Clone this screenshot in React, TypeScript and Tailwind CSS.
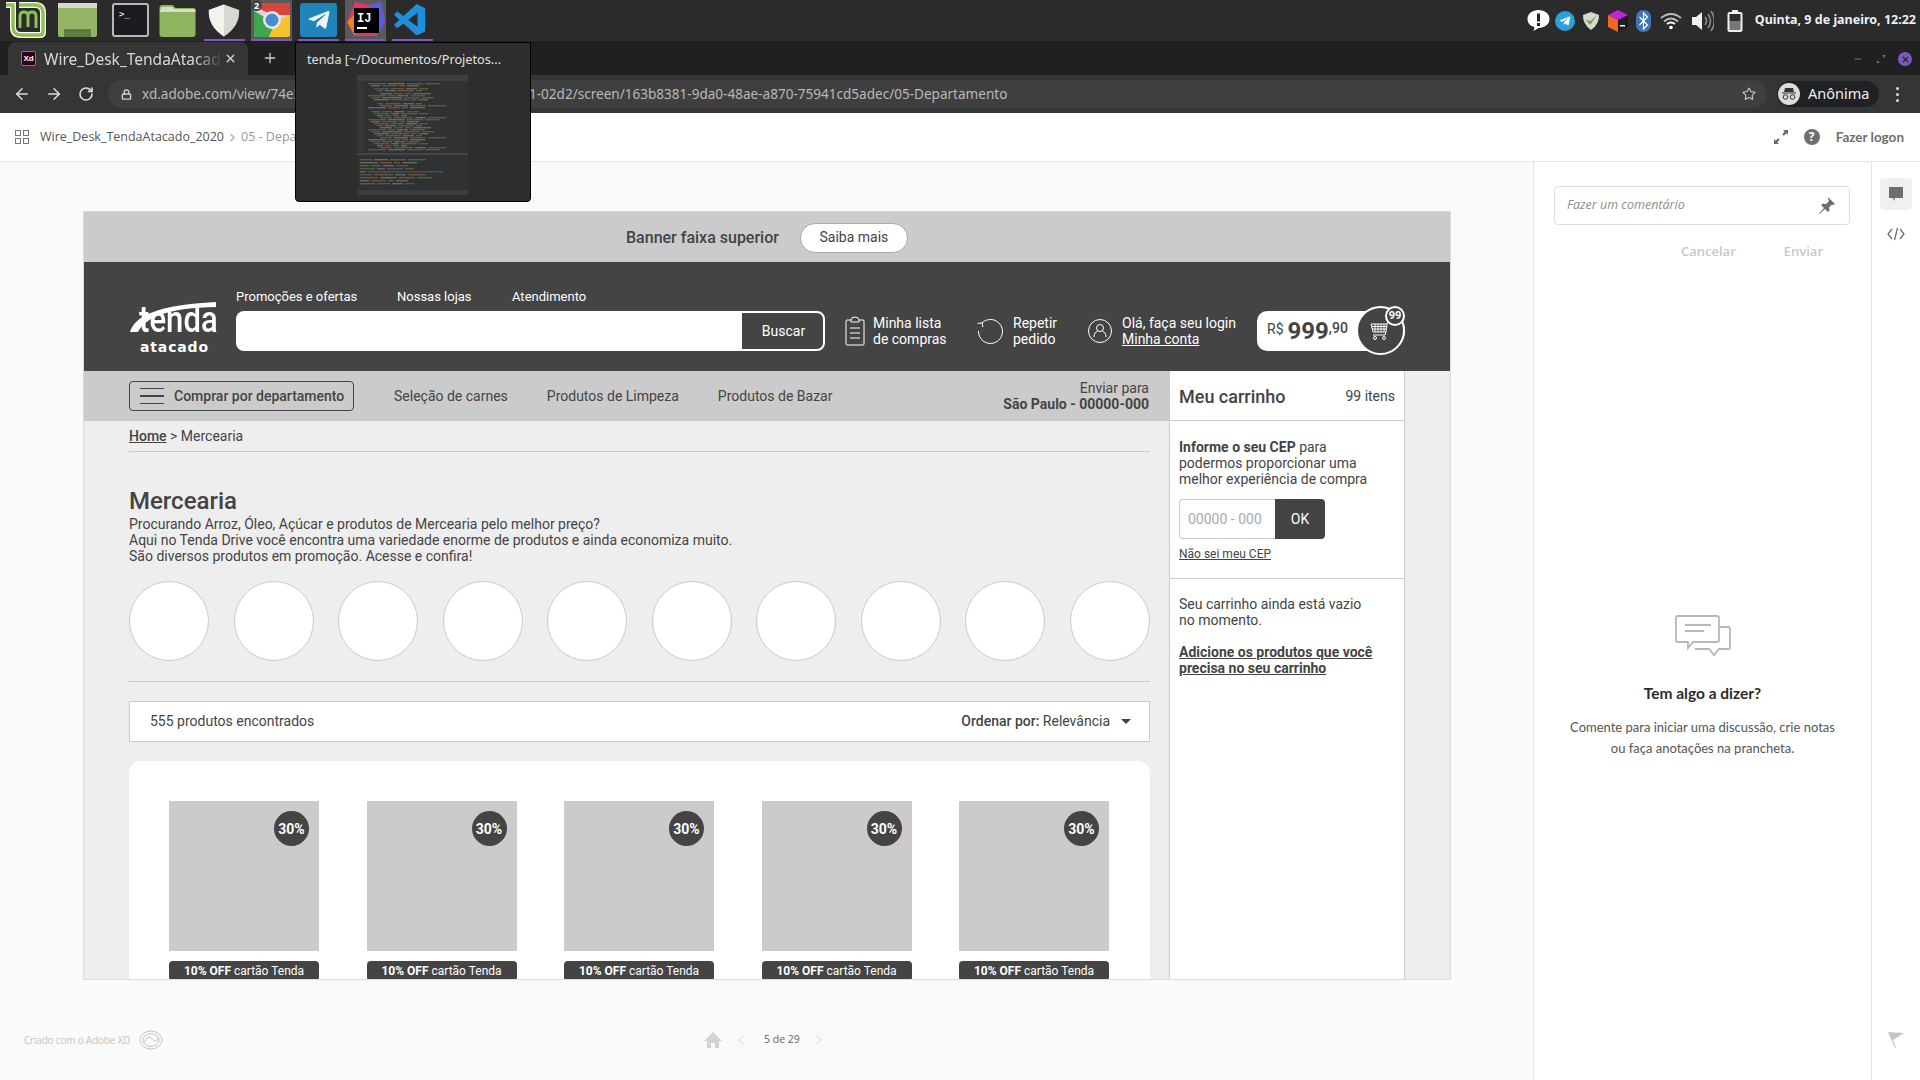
import { ArrowLeft, ArrowRight, RotateCw, Lock, Star, Plus, X, Minus, ChevronLeft, ChevronRight, ChevronRight as Crumb } from "lucide-react";
import { VscVscode } from "react-icons/vsc";
import { FaTelegramPlane } from "react-icons/fa";

const ROBOTO = "font-['Roboto',sans-serif]";

function MintLogo() {
  return (
    <svg width="42" height="38" viewBox="0 0 42 38" className="ml-1 mt-0.5">
      <path d="M2 3h7v22q0 8 8 8h19q3 0 3-3V11q0-8-8-8H15" fill="none" stroke="#fff" strokeWidth="6" />
      <path d="M2 3h7v22q0 8 8 8h19q3 0 3-3V11q0-8-8-8H15" fill="none" stroke="#8cc152" strokeWidth="3.4" />
      <path d="M16 26V14q0-4 4-4t4 4v11M24 14q0-4 4-4t4 4v12" fill="none" stroke="#8cc152" strokeWidth="3" />
    </svg>
  );
}

function FilesIcon() {
  return (
    <svg width="39" height="34" viewBox="0 0 39 34" className="ml-3 mt-[3px]">
      <rect x="0" y="0" width="39" height="34" rx="2" fill="#93b565" />
      <rect x="0" y="0" width="39" height="5" fill="#d8d8d0" />
      <rect x="6" y="26" width="27" height="8" fill="#5f7d40" />
    </svg>
  );
}

function TerminalIcon() {
  return (
    <div className="ml-[15px] mt-[3px] flex h-[34px] w-[37px] rounded-[3px] border-2 border-[#b8b8b8] bg-[#1d1a22] pl-[5px] pt-[3px]">
      <span className="font-['DejaVu_Sans_Mono',monospace] text-[9px] leading-[12px] text-white">&gt;_</span>
    </div>
  );
}

function FolderIcon() {
  return (
    <svg width="39" height="32" viewBox="0 0 38 32" className="ml-[9px] mt-[5px]">
      <path d="M1 3q0-3 3-3h10l3 3h18q2 0 2 2v24q0 3-3 3H4q-3 0-3-3z" fill="#8fb45f" />
      <path d="M1 7h36V5q0-1-2-1H16l-2-2H3z" fill="#d8dccb" />
    </svg>
  );
}

function ShieldIcon() {
  return (
    <svg width="34" height="35" viewBox="0 0 36 36" className="ml-[10px] mt-[3px]">
      <path d="M18 1l16 6q1 17-16 28Q1 24 2 7z" fill="#d8d8d2" />
      <path d="M18 1v34Q1 24 2 7z" fill="#f2f2ee" />
    </svg>
  );
}

function ChromeIcon() {
  return (
    <div className="relative ml-[10px] flex h-[39px] w-[41px] items-center justify-center bg-[#5a5a5a]">
      <svg width="36" height="34" viewBox="0 0 36 34">
        <rect width="36" height="34" rx="3" fill="#d8d8d8" />
        <path d="M0 3q0-3 3-3h30q3 0 3 3v9H18z" fill="#d9453c" />
        <path d="M0 8v23q0 3 3 3h12l6-14z" fill="#3da64e" />
        <path d="M36 12v19q0 3-3 3H15l8-16z" fill="#f6c42a" />
        <circle cx="18" cy="17" r="9" fill="#e8e8e8" />
        <circle cx="18" cy="17" r="6.5" fill="#4a8bd0" />
      </svg>
      <span className="absolute left-0 top-0 flex h-[11px] w-[11px] items-center justify-center rounded-full bg-[#444] font-['Noto_Sans',sans-serif] text-[9px] font-bold leading-none text-white">
        2
      </span>
    </div>
  );
}

function TelegramIcon() {
  return (
    <div className="ml-[8px] mt-[3px] flex h-[34px] w-[37px] items-center justify-center rounded-[3px] bg-[#1f85b8]">
      <FaTelegramPlane size={24} color="#eaf5fb" />
    </div>
  );
}

function IdeaIcon() {
  return (
    <div className="ml-[8px] flex h-[39px] w-[41px] items-center justify-center bg-[#5a5a5a]">
      <svg width="38" height="36" viewBox="0 0 38 36">
        <path d="M8 0l14 3 12-3 4 20-8 14H8L0 20z" fill="#e8336c" />
        <path d="M22 3l12-3 4 20-8 14z" fill="#5b5be0" />
        <path d="M0 20l8-8v22z" fill="#f2811d" />
        <rect x="7" y="6" width="25" height="25" fill="#000" />
        <text x="10" y="20" fill="#fff" fontSize="12" fontWeight="700" fontFamily="Liberation Mono, monospace">IJ</text>
        <rect x="10" y="25" width="10" height="2" fill="#fff" />
      </svg>
    </div>
  );
}

function TopBar() {
  return (
    <div className="relative flex h-[41px] shrink-0 bg-[#2b2b2b]">
      <MintLogo />
      <FilesIcon />
      <TerminalIcon />
      <FolderIcon />
      <ShieldIcon />
      <ChromeIcon />
      <TelegramIcon />
      <IdeaIcon />
      <div className="ml-[6px] mt-[2px]">
        <VscVscode size={38} color="#1f8fdc" />
      </div>
      {/* barras roxas dos apps abertos */}
      <div className="absolute left-[204px] top-[39px] h-[2px] w-[41px] bg-[#7e57c2]" />
      <div className="absolute left-[251px] top-[39px] h-[2px] w-[41px] bg-[#7e57c2]" />
      <div className="absolute left-[298px] top-[39px] h-[2px] w-[41px] bg-[#7e57c2]" />
      <div className="absolute left-[345px] top-[39px] h-[2px] w-[41px] bg-[#7e57c2]" />
      <div className="absolute left-[392px] top-[39px] h-[2px] w-[41px] bg-[#7e57c2]" />
      <Tray />
    </div>
  );
}

function Tray() {
  return (
    <div className="ml-auto flex h-[41px] items-center pr-[4px]">
      <svg width="23" height="23" viewBox="0 0 23 23">
        <path d="M11.5 1c6 0 11 3.500 11 9s-5 9-11 9l-5 3 1-4C3 17 .5 14 .5 10 .5 4.500 5.500 1 11.500 1z" fill="#fff" />
        <rect x="10" y="4.500" width="3" height="8" fill="#222" />
        <rect x="10" y="14" width="3" height="3" fill="#222" />
      </svg>
      <div className="ml-[5px] flex h-5 w-5 items-center justify-center rounded-full bg-[#2aa1da]">
        <FaTelegramPlane size={12} color="#fff" />
      </div>
      <svg width="20" height="20" viewBox="0 0 20 20" className="ml-[6px]">
        <path d="M10 1l8 3q.5 9-8 15Q1.500 13 2 4z" fill="#d9d9d4" />
        <path d="M5 9l4 5 7-10-6.500 6z" fill="#6aa52e" />
      </svg>
      <svg width="20" height="22" viewBox="0 0 20 22" className="ml-[7px]">
        <path d="M10 0l10 5v12l-10 5z" fill="#1d1d1d" />
        <path d="M0 5l10 5v12L0 17z" fill="#f26522" />
        <path d="M0 5l10-5 10 5-10 5z" fill="#c026d3" />
        <rect x="12" y="15" width="5" height="1.500" fill="#fff" />
      </svg>
      <svg width="15" height="22" viewBox="0 0 15 22" className="ml-[8px]">
        <rect width="15" height="22" rx="7" fill="#3f74b5" />
        <path d="M3.500 7l8 8-4 4V3l4 4-8 8" fill="none" stroke="#fff" strokeWidth="1.200" />
      </svg>
      <svg width="22" height="18" viewBox="0 0 22 18" className="ml-[9px]">
        <path d="M1 6q10-8 20 0M4 9.500q7-6 14 0" fill="none" stroke="#bdbdbd" strokeWidth="1.800" />
        <path d="M7 12q4-3 8 0" fill="none" stroke="#fff" strokeWidth="1.800" />
        <circle cx="11" cy="15.500" r="1.800" fill="#fff" />
      </svg>
      <svg width="22" height="22" viewBox="0 0 22 22" className="ml-[10px]">
        <path d="M0 7h4l6-5v18l-6-5H0z" fill="#eee" />
        <path d="M13 7q3 4 0 8M16 4q5 7 0 14M19 1q7 10 0 20" fill="none" stroke="#8a8a8a" strokeWidth="1.600" />
      </svg>
      <svg width="16" height="22" viewBox="0 0 16 22" className="ml-[13px]">
        <rect x="5" y="0" width="6" height="2" fill="#eee" />
        <rect x="0.500" y="2" width="15" height="20" rx="2" fill="#eee" />
        <rect x="2.500" y="4" width="11" height="7" fill="#2b2b2b" />
        <rect x="2.500" y="11" width="11" height="9" fill="#777" />
      </svg>
      <span className="ml-[12px] font-['Noto_Sans',sans-serif] text-[12.5px] font-bold text-[#eaf1f7]">
        Quinta, 9 de janeiro, 12:22
      </span>
    </div>
  );
}

function TabStrip() {
  return (
    <div className="flex h-[34px] shrink-0 items-end bg-[#202020] pl-[8px] font-['Noto_Sans',sans-serif] text-[#e6e6e6]">
      <div className="flex h-[33px] w-[240px] items-center rounded-t-lg bg-[#353535] pl-[13px]">
        <span className="flex h-[15px] w-[15px] items-center justify-center rounded-[2px] border border-[#ff2bc2] bg-[#2e001f] font-['Liberation_Sans',sans-serif] text-[8px] font-bold leading-none text-white">
          Xd
        </span>
        <span className="ml-[8px] w-[178px] whitespace-nowrap text-[15.5px] leading-[20px] text-[#d8d8d8] [mask-image:linear-gradient(to_right,black_85%,transparent)]">
          Wire_Desk_TendaAtacad
        </span>
        <X size={13} strokeWidth={2.5} className="ml-[2px] text-[#d0d0d0]" />
      </div>
      <Plus size={16} strokeWidth={2} className="mb-[9px] ml-[14px] text-[#c8c8c8]" />
      <div className="mb-[9px] ml-auto flex items-center pr-[8px]">
        <Minus size={10} strokeWidth={2} className="text-[#8a8a8a]" />
        <svg width="8" height="8" viewBox="0 0 8 8" className="ml-[14px]">
          <path d="M5 0h3v3zM0 5v3h3z" fill="#777" />
        </svg>
        <span className="ml-[13px] flex h-[14px] w-[14px] items-center justify-center rounded-full bg-[#7e57c2]">
          <X size={9} strokeWidth={3.5} className="text-[#2b2b2b]" />
        </span>
      </div>
    </div>
  );
}

function Toolbar() {
  return (
    <div className="flex h-[38px] shrink-0 items-center bg-[#353535] pl-[13px] font-['Noto_Sans',sans-serif]">
      <ArrowLeft size={18} strokeWidth={2} className="text-[#dcdcdc]" />
      <ArrowRight size={18} strokeWidth={2} className="ml-[14px] text-[#dcdcdc]" />
      <RotateCw size={16} strokeWidth={2.4} className="ml-[15px] text-[#dcdcdc]" />
      <div className="ml-[14px] flex h-[28px] w-[1659px] items-center rounded-full bg-[#3f3f3f] pl-[13px]">
        <Lock size={11} strokeWidth={3} className="text-[#d0d0d0]" />
        <span className="ml-[10px] whitespace-nowrap text-[13.55px] text-[#b9b9b9]">
          xd.adobe.com/view/74e3f1c6-82b5-4ab4-9c10-6d27e1a8b3f41-02d2/screen/163b8381-9da0-48ae-a870-75941cd5adec/05-Departamento
        </span>
        <Star size={14} strokeWidth={2} className="ml-auto mr-[11px] text-[#c4c4c4]" />
      </div>
      <div className="ml-[10px] flex h-[26px] w-[102px] items-center rounded-full bg-[#202124] pl-[1px]">
        <span className="flex h-[22px] w-[22px] items-center justify-center rounded-full bg-[#dcdcdc]">
          <svg width="16" height="14" viewBox="0 0 16 14">
            <path d="M4 1h8l1 4H3zM1 5.500h14v1H1z" fill="#333" />
            <circle cx="4.500" cy="10" r="2.300" fill="none" stroke="#333" />
            <circle cx="11.500" cy="10" r="2.300" fill="none" stroke="#333" />
          </svg>
        </span>
        <span className="ml-[8px] text-[14.5px] text-[#eeeeee]">Anônima</span>
      </div>
      <div className="ml-[17px] flex flex-col gap-[3px]">
        <span className="h-[3px] w-[3px] rounded-full bg-[#ddd]" />
        <span className="h-[3px] w-[3px] rounded-full bg-[#ddd]" />
        <span className="h-[3px] w-[3px] rounded-full bg-[#ddd]" />
      </div>
    </div>
  );
}

// miniatura borrada do IntelliJ: linhas de código de mentira
const CODE_COLORS = ["#8d8d8d", "#a56a35", "#5d8650", "#8d8d8d", "#6f6f6f", "#a56a35"];

function ThumbRow({ y, x, seed }: { y: number; x: number; seed: number }) {
  const parts: React.ReactNode[] = [];
  let cx = x;
  for (let i = 0; i < 4; i++) {
    const w = 6 + ((seed * (i + 3) * 7) % 15);
    if (cx + w > 106) break;
    parts.push(<rect key={i} x={cx} y={y} width={w} height="1.4" fill={CODE_COLORS[(seed + i) % 6]} />);
    cx += w + 2;
  }
  return <g>{parts}</g>;
}

function WindowPreview() {
  const code = [8, 10, 13, 15, 18, 20, 22, 24, 28, 30, 32, 36, 38, 40, 42, 44, 46, 48, 50, 52, 54, 56, 58, 60, 62, 64, 66, 68, 70, 72, 74];
  const console_ = [84, 87, 90, 93, 96, 99, 102, 105, 108];
  return (
    <div className="absolute left-[295px] top-[42px] z-10 h-[160px] w-[236px] rounded-b border border-black bg-[#2d2d2d] pl-[11px] pt-[6px] font-['Noto_Sans',sans-serif]">
      <p className="whitespace-nowrap text-[12.7px] leading-[20px] text-[#e0e0e0]">tenda [~/Documentos/Projetos...</p>
      <svg width="111" height="120" viewBox="0 0 111 120" className="ml-[50px] mt-[6px] opacity-60">
        <rect width="111" height="120" fill="#323436" />
        <rect width="111" height="6" fill="#4a4c4e" />
        <rect x="0" y="6" width="7" height="72" fill="#3a3c3e" />
        <rect x="0" y="78" width="111" height="2" fill="#555" />
        <rect x="0" y="115" width="111" height="5" fill="#45474a" />
        {code.map((y, i) => (
          <ThumbRow key={y} y={y} x={11 + (i % 5) * 3} seed={i + 2} />
        ))}
        {console_.map((y, i) => (
          <ThumbRow key={y} y={y} x={3} seed={i + 11} />
        ))}
        <rect x="16" y="96" width="70" height="1.500" fill="#3f6b9c" />
      </svg>
    </div>
  );
}

function XdHeader() {
  return (
    <div className="flex h-[49px] shrink-0 items-center border-b border-[#e4e4e4] bg-white pl-[15px] pr-[16px] font-['Open_Sans',sans-serif]">
      <div className="grid h-[14px] w-[14px] grid-cols-2 gap-[2px]">
        <span className="border border-[#777]" />
        <span className="border border-[#777]" />
        <span className="border border-[#777]" />
        <span className="border border-[#777]" />
      </div>
      <span className="ml-[11px] text-[12.5px] text-[#555]">Wire_Desk_TendaAtacado_2020</span>
      <Crumb size={13} className="ml-[2px] text-[#aaa]" />
      <span className="ml-[2px] text-[12.5px] text-[#999]">05 - Departamento</span>
      <svg width="16" height="16" viewBox="0 0 16 16" className="ml-auto">
        <path d="M10 1h5v5l-1.700-1.700-2.500 2.500-1.500-1.500 2.500-2.500zM6 15H1v-5l1.700 1.700 2.500-2.500 1.500 1.500-2.500 2.500z" fill="#666" />
      </svg>
      <span className="ml-[15px] flex h-[16px] w-[16px] items-center justify-center rounded-full bg-[#6e6e6e] text-[12px] font-bold leading-none text-white">
        ?
      </span>
      <span className="ml-[16px] font-['Lato',sans-serif] text-[13.5px] font-bold text-[#6e6e6e]">Fazer logon</span>
    </div>
  );
}

function ListIcon() {
  return (
    <svg width="20" height="30" viewBox="0 0 20 30" fill="none" stroke="#fff" strokeWidth="1">
      <path d="M6 4H2q-1 0-1 1v23q0 1 1 1h16q1 0 1-1V5q0-1-1-1h-4" />
      <path d="M6 6V4q0-3 4-3t4 3v2zM5 12h10M5 17h10M5 22h10" />
    </svg>
  );
}

function RepeatIcon() {
  return (
    <svg width="26" height="26" viewBox="0 0 26 26" fill="none" stroke="#fff" strokeWidth="1">
      <path d="M5 5A12 12 0 1 1 1.500 13" />
      <path d="M1 5h4.500V9.500" transform="rotate(-10 4 7)" />
    </svg>
  );
}

function UserIcon() {
  return (
    <svg width="24" height="24" viewBox="0 0 24 24" fill="none" stroke="#fff" strokeWidth="1">
      <circle cx="12" cy="12" r="11.500" />
      <circle cx="12" cy="9" r="3.500" />
      <path d="M6 18q0-5 3.500-5.500M18 18q0-5-3.500-5.500" />
    </svg>
  );
}

function CartIcon() {
  return (
    <svg width="22" height="20" viewBox="0 0 22 20" fill="none" stroke="#fff" strokeWidth="1">
      <path d="M1 3h16l-1 8H3zM5 3v8M8 3v8M11 3v8M14 3v8M1.500 5.500h15M2 8h14M17 3l1-2h3M16 11l-1 3H3" />
      <circle cx="5" cy="17" r="1.500" />
      <circle cx="14" cy="17" r="1.500" />
    </svg>
  );
}

function Logo() {
  return (
    <div className="relative mt-[38px] h-[56px] w-[88px] text-white">
      <p className="origin-left scale-x-[0.84] whitespace-nowrap pl-[12px] font-['Roboto',sans-serif] text-[37px] font-medium leading-[40px]">tenda</p>
      <p className="pl-[11px] font-['DejaVu_Sans',sans-serif] text-[14px] font-bold leading-[14px] tracking-[0.85px]">atacado</p>
      <svg width="88" height="36" viewBox="0 0 88 36" className="absolute left-0 top-0">
        <path d="M1 32C6 16 28 5 87 2v5C40 8 18 16 9 32z" fill="#fff" />
      </svg>
    </div>
  );
}

function SiteHeader() {
  return (
    <div className="flex h-[109px] shrink-0 bg-[#444444] pl-[45px] text-white">
      <div className="mr-[19px] w-[88px]">
        <Logo />
      </div>
      <div className="pt-[24px]">
        <div className="mb-[5px] flex h-5 items-center pt-[1px] text-[13px]">
          <span className="w-[161px]">Promoções e ofertas</span>
          <span className="w-[115px]">Nossas lojas</span>
          <span>Atendimento</span>
        </div>
        <div className="flex h-10 items-center text-[14px] leading-[16px]">
          <div className="h-10 w-[504px] rounded-l-lg bg-white" />
          <div className="flex h-10 w-[85px] items-center justify-center rounded-r-lg border-2 border-white pl-[2px]">Buscar</div>
          <span className="ml-[20px]"><ListIcon /></span>
          <p className="ml-[8px] w-[96px]">Minha lista<br />de compras</p>
          <span className="ml-[8px]"><RepeatIcon /></span>
          <p className="ml-[10px] w-[54px]">Repetir<br />pedido</p>
          <span className="ml-[21px]"><UserIcon /></span>
          <p className="ml-[10px] w-[135px]">Olá, faça seu login<br /><span className="underline">Minha conta</span></p>
          <div className="relative flex h-10 w-[148px] items-center rounded-l-xl rounded-r-3xl bg-white pl-[10px] text-[#444]">
            <span className="mb-[4px] text-[14px]">R$</span>
            <span className="ml-[4px] text-[24px] font-bold">999</span>
            <span className="mb-[6px] text-[14px] font-medium">,90</span>
            <span className="absolute right-0 top-[-5px] flex h-[49px] w-[49px] items-center justify-center rounded-full border-2 border-white bg-[#444]">
              <CartIcon />
            </span>
            <span className="absolute right-0 top-[-5px] flex h-[20px] w-[20px] items-center justify-center rounded-full border-2 border-white bg-[#444] text-[11px] font-bold text-white">
              99
            </span>
          </div>
        </div>
      </div>
    </div>
  );
}

function NavBar() {
  return (
    <div className="flex h-[50px] shrink-0 items-center bg-[#cbcbcb] pl-[45px] pr-[20px] text-[14px] text-[#444]">
      <div className="flex h-[30px] w-[225px] items-center rounded border border-[#444] pl-[10px] font-medium">
        <div className="flex w-[24px] flex-col gap-[6px]">
          <span className="h-[1.500px] bg-[#444]" />
          <span className="h-[1.500px] bg-[#444]" />
          <span className="h-[1.500px] bg-[#444]" />
        </div>
        <span className="ml-[10px]">Comprar por departamento</span>
      </div>
      <span className="ml-[40px]">Seleção de carnes</span>
      <span className="ml-[39px]">Produtos de Limpeza</span>
      <span className="ml-[39px]">Produtos de Bazar</span>
      <p className="ml-auto text-right leading-[16px]">
        Enviar para<br /><span className="font-bold">São Paulo - 00000-000</span>
      </p>
    </div>
  );
}

function ProductCard() {
  return (
    <div className="w-[150px]">
      <div className="relative h-[150px] bg-[#cbcbcb]">
        <span className="absolute right-[10px] top-[10px] flex h-[35px] w-[35px] items-center justify-center rounded-full bg-[#444] pt-[1px] text-[14px] font-bold text-white">
          30%
        </span>
      </div>
      <div className="mt-[10px] flex h-[20px] items-center justify-center rounded bg-[#444] text-[12px] text-white">
        <span className="font-bold">10% OFF</span>&nbsp;cartão Tenda
      </div>
    </div>
  );
}

function Content() {
  return (
    <div className="pl-[45px] pr-[19px] text-[#444]">
      <p className="flex h-[31px] items-center border-b border-[#cbcbcb] text-[14px]">
        <span className="font-medium underline">Home</span>&nbsp;&gt; Mercearia
      </p>
      <h1 className="mt-[35px] text-[24px] font-medium leading-[29px]">Mercearia</h1>
      <p className="text-[14px] leading-[16px]">
        Procurando Arroz, Óleo, Açúcar e produtos de Mercearia pelo melhor preço?<br />
        Aqui no Tenda Drive você encontra uma variedade enorme de produtos e ainda economiza muito.<br />
        São diversos produtos em promoção. Acesse e confira!
      </p>
      <div className="mt-[17px] flex justify-between">
        {Array.from({ length: 10 }).map((_, i) => (
          <span key={i} className="h-[80px] w-[80px] rounded-full border border-[#cbcbcb] bg-white" />
        ))}
      </div>
      <div className="mt-[20px] border-t border-[#cbcbcb]" />
      <div className="mt-[19px] flex h-[41px] items-center justify-between border-[1.5px] border-[#cbcbcb] bg-white pl-[20px] pr-[18px] text-[14px]">
        <span>555 produtos encontrados</span>
        <span className="flex items-center">
          <span className="font-medium">Ordenar por:</span>&nbsp;Relevância
          <span className="ml-[11px] h-0 w-0 border-x-[5px] border-t-[5px] border-x-transparent border-t-[#444]" />
        </span>
      </div>
      <div className="mt-[19px] flex justify-between rounded-t-xl bg-white pl-[40px] pr-[41px] pt-[40px]">
        {Array.from({ length: 5 }).map((_, i) => (
          <ProductCard key={i} />
        ))}
      </div>
    </div>
  );
}

function CartPanel() {
  return (
    <aside className="w-[236px] shrink-0 border-x border-[#cbcbcb] bg-white text-[#444]">
      <div className="flex h-[50px] items-center justify-between border-b border-[#cbcbcb] pl-[9px] pr-[9px] pt-[1px]">
        <span className="text-[18px] font-medium">Meu carrinho</span>
        <span className="text-[14px]">99 itens</span>
      </div>
      <div className="h-[158px] border-b border-[#cbcbcb] pl-[9px] pt-[18px] text-[14px] leading-[16px]">
        <p><span className="font-bold">Informe o seu CEP</span> para<br />podermos proporcionar uma<br />melhor experiência de compra</p>
        <div className="mt-[12px] flex h-[40px] w-[146px]">
          <span className="flex flex-1 items-center rounded-l border border-r-0 border-[#cbcbcb] pl-[8px] text-[#aaa]">00000 - 000</span>
          <span className="flex w-[50px] items-center justify-center rounded-r bg-[#444] text-white">OK</span>
        </div>
        <p className="mt-[7px] text-[12px] underline">Não sei meu CEP</p>
      </div>
      <div className="pl-[9px] pt-[17px] text-[14px] leading-[16px]">
        <p>Seu carrinho ainda está vazio<br />no momento.</p>
        <p className="mt-[16px] font-bold underline">Adicione os produtos que você<br />precisa no seu carrinho</p>
      </div>
    </aside>
  );
}

function Wireframe() {
  return (
    <div className={`flex h-[769px] w-[1368px] flex-col overflow-hidden border border-[#dcdcdc] bg-[#eeeeee] ${ROBOTO}`}>
      <div className="flex h-[50px] shrink-0 items-center bg-[#cbcbcb] pl-[542px] pt-[1px] text-[#444]">
        <span className="text-[16px] font-medium">Banner faixa superior</span>
        <span className="ml-[21px] flex h-[30px] w-[108px] items-center justify-center rounded-full border border-[#aaa] bg-white text-[14px]">Saiba mais</span>
      </div>
      <SiteHeader />
      <div className="flex min-h-0 flex-1">
        <div className="w-[1085px] shrink-0">
          <NavBar />
          <Content />
        </div>
        <CartPanel />
      </div>
    </div>
  );
}

function ViewerFooter() {
  return (
    <div className="flex flex-1 items-center pt-[20px] font-['Open_Sans',sans-serif] text-[10px]">
      <span className="ml-[24px] w-[110px] whitespace-nowrap tracking-[-0.2px] text-[#c4c4c4]">Criado com o Adobe XD</span>
      <svg width="24" height="24" viewBox="0 0 24 24" fill="none" stroke="#c4c4c4" strokeWidth="1" className="ml-[5px]">
        <ellipse cx="12" cy="12" rx="11" ry="9" />
        <ellipse cx="12" cy="12" rx="8" ry="6.500" />
        <path d="M5 15q4-9 8-4t6-1" />
      </svg>
      <svg width="18" height="16" viewBox="0 0 18 16" className="ml-[541px]">
        <path d="M9 0l9 9h-3v7h-4v-5H7v5H3V9H0z" fill="#d2d2d2" />
      </svg>
      <ChevronLeft size={16} strokeWidth={1} className="ml-[11px] text-[#bbb]" />
      <span className="ml-[15px] whitespace-nowrap text-[10.5px] text-[#666]">5 de 29</span>
      <ChevronRight size={16} strokeWidth={1} className="ml-[11px] text-[#bbb]" />
    </div>
  );
}

function CommentPanel() {
  return (
    <div className="flex w-[339px] shrink-0 flex-col items-center border-x border-[#e4e4e4] bg-white pt-[24px] font-['Open_Sans',sans-serif]">
      <div className="ml-[20px] flex h-[39px] w-[296px] items-center justify-between self-start rounded border border-[#ddd] pl-[12px] pr-[14px]">
        <span className="text-[12.5px] italic text-[#8e8e8e]">Fazer um comentário</span>
        <svg width="17" height="17" viewBox="0 0 17 17">
          <path d="M10 0l7 7-2 1-1-.500-3 3 .500 3-1.500 1.500-3-3-5.500 5-.500-.500 5-5.500-3-3L5 6.500l3 .500 3-3L10.500 3z" fill="#6e6e6e" />
        </svg>
      </div>
      <div className="mt-[17px] flex w-full text-[13px] font-semibold text-[#c8c8c8]">
        <span className="ml-[147px]">Cancelar</span>
        <span className="ml-[48px]">Enviar</span>
      </div>
      <svg width="56" height="44" viewBox="0 0 56 44" fill="none" stroke="#b8b8b8" strokeWidth="1.800" className="mt-[353px]">
        <path d="M3 1h39q2 0 2 2v22q0 2-2 2H18l-5 6v-6H3q-2 0-2-2V3q0-2 2-2z" />
        <path d="M45 12h8q2 0 2 2v18q0 2-2 2h-8l-1 0v0l-5 6-5-6H20" />
        <path d="M10 10h26M10 16h19" />
      </svg>
      <h2 className="mt-[23px] font-['Lato',sans-serif] text-[15.5px] font-bold text-[#2c2c2c]">Tem algo a dizer?</h2>
      <p className="mt-[12px] text-center font-['Lato',sans-serif] text-[13px] leading-[21px] text-[#555]">
        Comente para iniciar uma discussão, crie notas<br />ou faça anotações na prancheta.
      </p>
    </div>
  );
}

function Rail() {
  return (
    <div className="flex flex-1 flex-col items-center pt-[16px]">
      <div className="flex h-[32px] w-[32px] items-center justify-center rounded bg-[#f0f0f0]">
        <svg width="16" height="16" viewBox="0 0 16 16">
          <path d="M1 1h14v11H7l-1 3-1-3H1z" fill="#6e6e6e" />
        </svg>
      </div>
      <svg width="18" height="14" viewBox="0 0 18 14" fill="none" stroke="#6e6e6e" strokeWidth="1.300" className="mt-[17px]">
        <path d="M5 2L1 7l4 5M13 2l4 5-4 5M10.500 1l-3 12" />
      </svg>
      <svg width="18" height="18" viewBox="0 0 18 18" className="mt-auto mb-[31px]">
        <path d="M1 1l7 16 1-.500L6 9l11-7z" fill="#c4c4c4" />
      </svg>
    </div>
  );
}

export default function App() {
  return (
    <div className="relative flex h-[1080px] w-[1920px] flex-col overflow-hidden bg-white">
      <TopBar />
      <TabStrip />
      <Toolbar />
      <XdHeader />
      <WindowPreview />
      <div className="flex min-h-0 flex-1">
        <div className="flex w-[1533px] shrink-0 flex-col bg-[#fafafa] pt-[49px]">
          <div className="pl-[83px]">
            <Wireframe />
          </div>
          <ViewerFooter />
        </div>
        <CommentPanel />
        <Rail />
      </div>
    </div>
  );
}
